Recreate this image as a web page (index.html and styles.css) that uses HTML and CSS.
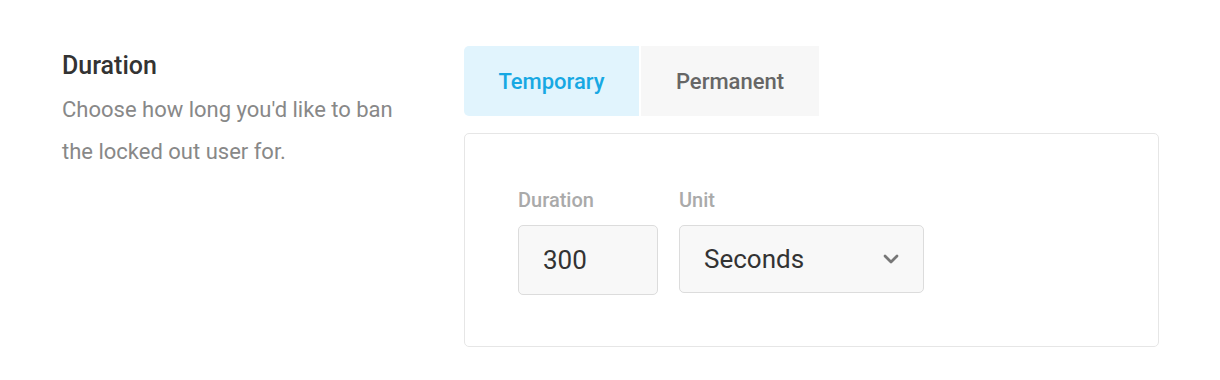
FILE: index.html
```html
<!DOCTYPE html>
<html>
<head>
<meta charset="utf-8">
<link rel="stylesheet" href="styles.css">
</head>
<body>
<div class="row">
  <div class="info">
    <h2 class="title">Duration</h2>
    <p class="desc">Choose how long you'd like to ban the locked out user for.</p>
  </div>
  <div class="settings">
    <div class="tabs">
      <div class="tab tab-active">Temporary</div>
      <div class="tab">Permanent</div>
    </div>
    <div class="panel">
      <div class="field">
        <label class="label">Duration</label>
        <div class="input input-num">300</div>
      </div>
      <div class="field">
        <label class="label">Unit</label>
        <div class="input input-select">
          <span>Seconds</span>
          <svg class="chev" width="16" height="10" viewBox="0 0 16 10"><path d="M2 2 L8 8 L14 2" fill="none" stroke="#777" stroke-width="2.8" stroke-linecap="round" stroke-linejoin="round"/></svg>
        </div>
      </div>
    </div>
  </div>
</div>
</body>
</html>
```
FILE: styles.css
```css
* { box-sizing: border-box; }
body {
  margin: 0;
  background: #fff;
  font-family: Roboto, "Liberation Sans", sans-serif;
}
.row {
  display: flex;
  padding: 46px 0 0 62px;
}
.info {
  width: 402px;
  flex: none;
}
.title {
  margin: 4px 0 0;
  font-size: 25px;
  font-weight: 500;
  color: #333;
  line-height: 32px;
}
.desc {
  margin: 7px 0 0;
  font-size: 22px;
  line-height: 42px;
  color: #888;
  width: 345px;
}
.settings {
  width: 695px;
}
.tabs {
  display: flex;
  gap: 2px;
}
.tab {
  height: 70px;
  display: flex;
  align-items: center;
  justify-content: center;
  font-size: 22px;
  font-weight: 500;
  background: #f7f7f7;
  color: #666;
  width: 178px;
}
.tab-active {
  width: 175px;
  background: #e1f4fd;
  color: #17a8e3;
  border-radius: 5px 0 0 5px;
}
.panel {
  margin-top: 17px;
  border: 1px solid #e6e6e6;
  border-radius: 5px;
  height: 214px;
  padding: 54px 0 0 53px;
  display: flex;
  gap: 21px;
}
.field {
  display: flex;
  flex-direction: column;
}
.label {
  font-size: 20px;
  font-weight: 500;
  color: #aaa;
  line-height: 24px;
  margin-bottom: 13px;
}
.input {
  background: #f8f8f8;
  border: 1px solid #dcdcdc;
  border-radius: 5px;
  font-size: 26px;
  color: #333;
  display: flex;
  align-items: center;
  padding-left: 24px;
}
.input-num {
  width: 140px;
  height: 70px;
}
.input-select {
  width: 245px;
  height: 68px;
  justify-content: space-between;
  padding-right: 24px;
}
.chev { display: block; }
```
